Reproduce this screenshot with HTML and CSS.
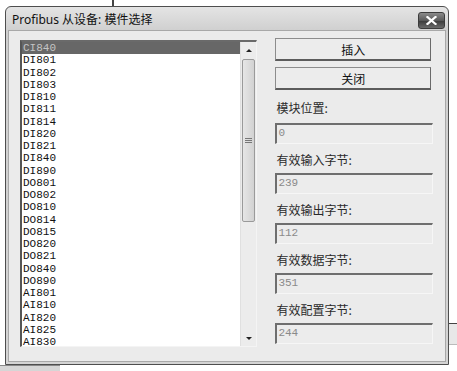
FILE: index.html
```html
<!DOCTYPE html>
<html lang="zh-CN">
<head>
  <meta charset="UTF-8" />
  <title>Profibus 从设备: 模件选择</title>
  <link rel="stylesheet" href="styles.css">
</head>
<body>
  <div class="desk">
    <span class="scrap scrap-top"></span>
    <span class="scrap scrap-right"></span>
    <span class="scrap scrap-bottom"></span>

    <div class="window">
      <div class="titlebar">
        <span class="title">Profibus 从设备: 模件选择</span>
        <button class="close" title="关闭">
          <svg width="11" height="9" viewBox="0 0 11 9">
            <path d="M1.5 1 L9.5 8 M9.5 1 L1.5 8" stroke="#fff" stroke-width="2.2" stroke-linecap="square"/>
          </svg>
        </button>
      </div>

      <div class="client">
        <div class="listbox">
          <ul class="items" id="moduleList"></ul>
          <div class="scrollbar">
            <div class="sb-btn"><span class="arrow up"></span></div>
            <div class="sb-track">
              <div class="sb-thumb"><span class="grip"></span></div>
            </div>
            <div class="sb-btn"><span class="arrow down"></span></div>
          </div>
        </div>

        <div class="panel">
          <button class="btn">插入</button>
          <button class="btn">关闭</button>

          <label class="field-label first">模块位置:</label>
          <div class="field">0</div>
          <label class="field-label">有效输入字节:</label>
          <div class="field">239</div>
          <label class="field-label">有效输出字节:</label>
          <div class="field">112</div>
          <label class="field-label">有效数据字节:</label>
          <div class="field">351</div>
          <label class="field-label">有效配置字节:</label>
          <div class="field">244</div>
        </div>
      </div>
    </div>
  </div>

  <script>
    const modules = [
      'CI840', 'DI801', 'DI802', 'DI803', 'DI810', 'DI811', 'DI814', 'DI820',
      'DI821', 'DI840', 'DI890', 'DO801', 'DO802', 'DO810', 'DO814', 'DO815',
      'DO820', 'DO821', 'DO840', 'DO890', 'AI801', 'AI810', 'AI820', 'AI825', 'AI830'
    ];

    const list = document.getElementById('moduleList');
    list.innerHTML = modules.map((name, i) =>
      `<li class="${i === 0 ? 'selected' : ''}">${name}</li>`).join('');
  </script>
</body>
</html>
```

FILE: styles.css
```css
body {
  margin: 0;
  background: #fff;
  font-family: "Noto Sans", "Noto Sans CJK SC", sans-serif;
}
.desk {
  position: relative;
  width: 457px;
  height: 371px;
  overflow: hidden;
  padding: 6px 0 0 5px;
  box-sizing: border-box;
}
.scrap {
  position: absolute;
  display: block;
}
.scrap-top {
  left: 112px;
  top: 0;
  width: 2px;
  height: 7px;
  background: #444;
}
.scrap-right {
  left: 449px;
  top: 323px;
  width: 8px;
  height: 20px;
  border-top: 1px solid #444;
  border-bottom: 1px solid #bbb;
  background: #e8e8e8;
}
.scrap-bottom {
  left: 0;
  top: 365px;
  width: 60px;
  height: 6px;
  background: #d6d6d6;
  border-top: 1px solid #888;
}

.window {
  position: relative;
  width: 444px;
  height: 359px;
  box-sizing: border-box;
  border: 1px solid #4e4e4e;
  border-radius: 6px 6px 0 0;
  background: linear-gradient(#e4e4e4, #cfcfcf 24px, #d4d4d4);
  display: flex;
  flex-direction: column;
  padding: 0 2px 2px 2px;
}
.titlebar {
  height: 23px;
  display: flex;
  align-items: center;
  justify-content: space-between;
  padding: 0 1px 0 4px;
}
.title {
  font-size: 12px;
  color: #111;
}
.close {
  width: 27px;
  height: 17px;
  border: 1px solid #3c3c3c;
  border-radius: 3px;
  background: linear-gradient(#8a8a8a, #5a5a5a 50%, #3e3e3e 55%, #6a6a6a);
  display: flex;
  align-items: center;
  justify-content: center;
  padding: 0;
  margin-top: 3px;
}

.client {
  flex: 1;
  background: #ebebeb;
  border: 1px solid #a8a8a8;
  display: flex;
  padding: 9px 12px 0 11px;
  gap: 18px;
}

.listbox {
  width: 238px;
  height: 307px;
  box-sizing: border-box;
  border-top: 2px solid #6a6a6a;
  border-left: 2px solid #555;
  border-right: 1px solid #f4f4f4;
  border-bottom: 1px solid #f4f4f4;
  background: #fff;
  display: flex;
}
.items {
  flex: 1;
  margin: 0;
  padding: 0;
  list-style: none;
  overflow: hidden;
  font-family: "Liberation Mono", monospace;
  font-size: 11px;
  line-height: 12.25px;
  color: #111;
}
.items li {
  padding-left: 1px;
}
.items li.selected {
  background: #676767;
  color: #c4c4c4;
}

.scrollbar {
  width: 15px;
  display: flex;
  flex-direction: column;
  background: #ececec;
  border-left: 1px solid #e0e0e0;
}
.sb-btn {
  height: 16px;
  display: flex;
  align-items: center;
  justify-content: center;
}
.arrow {
  width: 0;
  height: 0;
  border-left: 3px solid transparent;
  border-right: 3px solid transparent;
}
.arrow.up {
  border-bottom: 3px solid #222;
}
.arrow.down {
  border-top: 3px solid #222;
}
.sb-track {
  flex: 1;
  padding: 1px 1px 0 1px;
}
.sb-thumb {
  height: 163px;
  box-sizing: border-box;
  border: 1px solid #9a9a9a;
  border-radius: 2px;
  background: linear-gradient(to right, #e6e6e6, #d2d2d2);
  display: flex;
  align-items: center;
  justify-content: center;
}
.grip {
  width: 7px;
  height: 5px;
  border-top: 1px solid #777;
  border-bottom: 1px solid #777;
  box-sizing: border-box;
  background: linear-gradient(#777, #777) center / 7px 1px no-repeat;
}

.panel {
  width: 158px;
  display: flex;
  flex-direction: column;
  margin-top: -2px;
}
.btn {
  height: 23px;
  box-sizing: border-box;
  border: 1px solid #8c8c8c;
  border-bottom: 2px solid #5c5c5c;
  border-right-color: #6a6a6a;
  background: #ececec;
  font-family: "Noto Sans CJK SC", sans-serif;
  font-size: 12px;
  color: #111;
  padding: 0;
  margin-bottom: 6px;
  margin-right: 2px;
}
.field-label {
  font-family: "Noto Sans CJK SC", sans-serif;
  font-size: 12px;
  line-height: 14px;
  color: #2a2a2a;
  padding: 9px 0 6px 1px;
}
.field-label.first {
  padding-top: 5px;
  margin-bottom: 2px;
}
.field {
  height: 21px;
  box-sizing: border-box;
  border-top: 2px solid #6e6e6e;
  border-left: 2px solid #6e6e6e;
  border-right: 1px solid #f6f6f6;
  border-bottom: 1px solid #f6f6f6;
  background: #ececec;
  font-family: "Liberation Mono", monospace;
  font-size: 11px;
  line-height: 17px;
  color: #8a8a8a;
  padding-left: 1px;
}
```
